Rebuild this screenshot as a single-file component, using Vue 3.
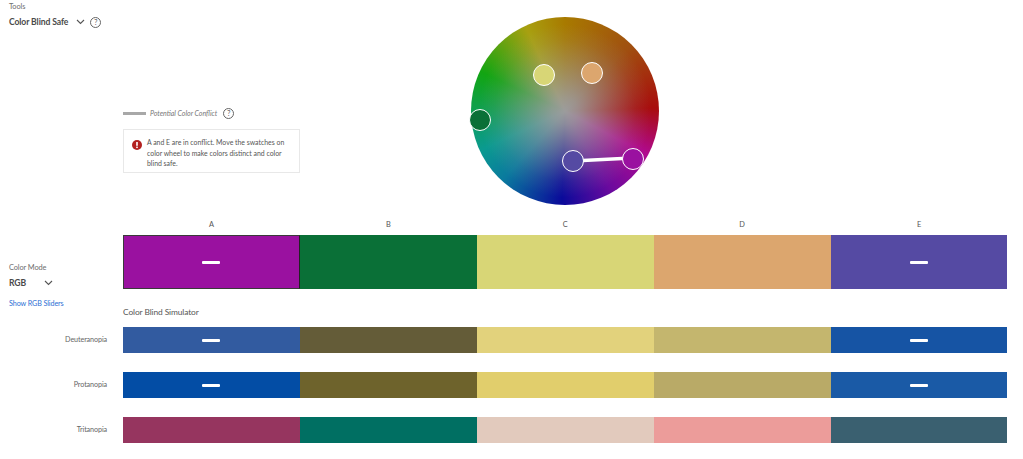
<script setup>
const letters = ['A', 'B', 'C', 'D', 'E']

const main = [
  { color: '#9a11a0', conflict: true, active: true },
  { color: '#0a7037' },
  { color: '#d8d676' },
  { color: '#dca66e' },
  { color: '#554aa3', conflict: true },
]

const simulators = [
  { name: 'Deuteranopia', colors: ['#325ba0', '#645c38', '#e2d27c', '#c4b66e', '#1654a4'], conflict: true },
  { name: 'Protanopia', colors: ['#034da5', '#6e632c', '#e1ce6c', '#b9aa67', '#1a5aa6'], conflict: true },
  { name: 'Tritanopia', colors: ['#96355f', '#006f62', '#e2cabd', '#ec9c9a', '#3a6070'], conflict: false },
]

// positions relative to the wheel box
const handles = [
  { color: '#9a11a0', x: 161.5, y: 142 },
  { color: '#0a7037', x: 9, y: 103 },
  { color: '#d8d676', x: 73, y: 58 },
  { color: '#dca66e', x: 121, y: 55.5 },
  { color: '#554aa3', x: 102, y: 143.5 },
]
</script>

<template>
  <div class="page">
    <section class="top">
      <aside class="tools">
        <div class="label">Tools</div>
        <div class="select">
          <span class="select-name">Color Blind Safe</span>
          <svg class="chevron" width="9" height="6" viewBox="0 0 9 6"><path d="M1 1l3.5 3.5L8 1" fill="none" stroke="#555" stroke-width="1.1" /></svg>
          <span class="help">?</span>
        </div>
      </aside>
      <div class="conflict-col">
        <div class="legend">
          <span class="legend-line"></span>
          <em>Potential Color Conflict</em>
          <span class="help">?</span>
        </div>
        <div class="notice">
          <svg class="alert" width="10" height="10" viewBox="0 0 10 10">
            <circle cx="5" cy="5" r="5" fill="#b3201f" />
            <rect x="4.2" y="2" width="1.6" height="3.8" fill="#fff" />
            <rect x="4.2" y="6.6" width="1.6" height="1.5" fill="#fff" />
          </svg>
          <p>A and E are in conflict. Move the swatches on color wheel to make colors distinct and color blind safe.</p>
        </div>
      </div>
      <div class="wheel-col">
        <div class="wheel">
          <div class="disc"></div>
          <svg class="link" width="188" height="188" viewBox="0 0 188 188"><line x1="102" y1="144" x2="161" y2="141" stroke="#fff" stroke-width="3.5" /></svg>
          <span
            v-for="(h, i) in handles"
            :key="i"
            class="handle"
            :style="{ background: h.color, left: h.x + 'px', top: h.y + 'px' }"
          ></span>
        </div>
      </div>
    </section>

    <div class="row letters">
      <div></div>
      <div class="cells">
        <span v-for="l in letters" :key="l">{{ l }}</span>
      </div>
    </div>

    <div class="row">
      <aside class="mode">
        <div class="label">Color Mode</div>
        <div class="select mode-select">
          <span class="select-name">RGB</span>
          <svg class="chevron" width="9" height="6" viewBox="0 0 9 6"><path d="M1 1l3.5 3.5L8 1" fill="none" stroke="#555" stroke-width="1.1" /></svg>
        </div>
        <a class="sliders">Show RGB Sliders</a>
      </aside>
      <div class="main-col">
        <div class="cells swatches">
          <div
            v-for="(s, i) in main"
            :key="i"
            class="cell"
            :class="{ active: s.active }"
            :style="{ background: s.color }"
          >
            <span v-if="s.conflict" class="dash"></span>
          </div>
        </div>
        <div class="sim-title">Color Blind Simulator</div>
      </div>
    </div>

    <div v-for="sim in simulators" :key="sim.name" class="row sim">
      <div class="sim-name">{{ sim.name }}</div>
      <div class="cells sim-cells">
        <div
          v-for="(c, i) in sim.colors"
          :key="i"
          class="cell"
          :style="{ background: c }"
        >
          <span v-if="sim.conflict && (i === 0 || i === 4)" class="dash"></span>
        </div>
      </div>
    </div>
  </div>
</template>

<style scoped>
.page {
  width: 1023px;
  height: 459px;
  overflow: hidden;
  background: #fff;
  font-family: "Lato", "Liberation Sans", sans-serif;
  color: #4b4b4b;
}

.top {
  display: flex;
  height: 217px;
}

.tools {
  width: 123px;
  flex: none;
  padding: 1px 0 0 9px;
  box-sizing: border-box;
}

.label {
  font-size: 7.4px;
  letter-spacing: -0.1px;
  line-height: 11px;
  color: #6e6e6e;
}

.select {
  display: flex;
  align-items: center;
  height: 14px;
  margin-top: 3px;
}

.select-name {
  font-size: 8.6px;
  letter-spacing: -0.1px;
  font-weight: 700;
  color: #4a4a4a;
  white-space: nowrap;
}

.chevron {
  margin-left: 8px;
}

.help {
  width: 9px;
  height: 9px;
  margin-left: 5px;
  border: 1px solid #666;
  border-radius: 50%;
  font-size: 7px;
  line-height: 9px;
  text-align: center;
  color: #555;
  flex: none;
}

.conflict-col {
  width: 177px;
  flex: none;
  padding-top: 106px;
  box-sizing: border-box;
}

.legend {
  display: flex;
  align-items: center;
  height: 14px;
}

.legend-line {
  width: 23px;
  height: 3px;
  margin-right: 4px;
  background: #a8a8a8;
}

.legend em {
  font-size: 7px;
  color: #777;
  white-space: nowrap;
}

.legend .help {
  margin-left: 6px;
}

.notice {
  display: flex;
  gap: 5px;
  height: 44px;
  margin-top: 9px;
  padding: 7px 8px 0 8px;
  box-sizing: border-box;
  border: 1px solid #e8e8e8;
}

.alert {
  flex: none;
  margin-top: 3px;
}

.notice p {
  margin: 0;
  font-size: 6.9px;
  line-height: 10.5px;
  color: #555;
}

.wheel-col {
  flex: 1;
  padding: 17px 0 0 171px;
}

.wheel {
  position: relative;
  width: 188px;
  height: 188px;
}

.disc {
  width: 100%;
  height: 100%;
  border-radius: 50%;
  background:
    radial-gradient(circle closest-side, #9c9c9c 0%, rgba(156, 156, 156, 0.88) 14%, rgba(156, 156, 156, 0.5) 45%, rgba(156, 156, 156, 0.14) 75%, rgba(156, 156, 156, 0) 92%),
    conic-gradient(#a87a00 0deg, #a05010 45deg, #a80c0c 88deg, #b00a90 118deg, #6a0a9e 150deg, #0a0a9a 182deg, #0a7a9e 222deg, #0a9a90 245deg, #12a512 295deg, #a8a010 335deg, #a87a00 360deg);
}

.link {
  position: absolute;
  left: 0;
  top: 0;
}

.handle {
  position: absolute;
  width: 22px;
  height: 22px;
  margin: -11px 0 0 -11px;
  box-sizing: border-box;
  border: 1.8px solid #fff;
  border-radius: 50%;
}

.row {
  display: grid;
  grid-template-columns: 123px 884.5px;
}

.cells {
  display: grid;
  grid-template-columns: repeat(5, 1fr);
}

.letters {
  height: 18px;
}

.letters .cells span {
  font-size: 7.4px;
  line-height: 15px;
  text-align: center;
  color: #555;
}

.swatches {
  height: 54px;
}

.cell {
  display: flex;
  align-items: center;
  justify-content: center;
  box-sizing: border-box;
}

.cell.active {
  border: 1px solid #2a2a2a;
  border-color: #3a3a3a #222 #3a3a3a #3a3a3a;
}

.dash {
  width: 18px;
  height: 3px;
  border-radius: 1px;
  background: #fff;
}

.mode {
  padding: 27px 0 0 9px;
}

.mode-select {
  margin-top: 3px;
}

.mode-select .chevron {
  margin-left: 18px;
}

.sliders {
  display: block;
  margin-top: 9px;
  font-size: 7.2px;
  letter-spacing: -0.1px;
  color: #2c6fd4;
  white-space: nowrap;
}

.main-col {
  height: 92px;
}

.sim-title {
  margin-top: 18px;
  font-size: 8.4px;
  letter-spacing: -0.1px;
  line-height: 11px;
  color: #555;
}

.sim {
  height: 26px;
  margin-bottom: 19px;
}

.sim-cells {
  height: 26px;
}

.sim-name {
  padding-right: 16px;
  font-size: 7.2px;
  letter-spacing: -0.1px;
  line-height: 26px;
  text-align: right;
  color: #666;
}
</style>
